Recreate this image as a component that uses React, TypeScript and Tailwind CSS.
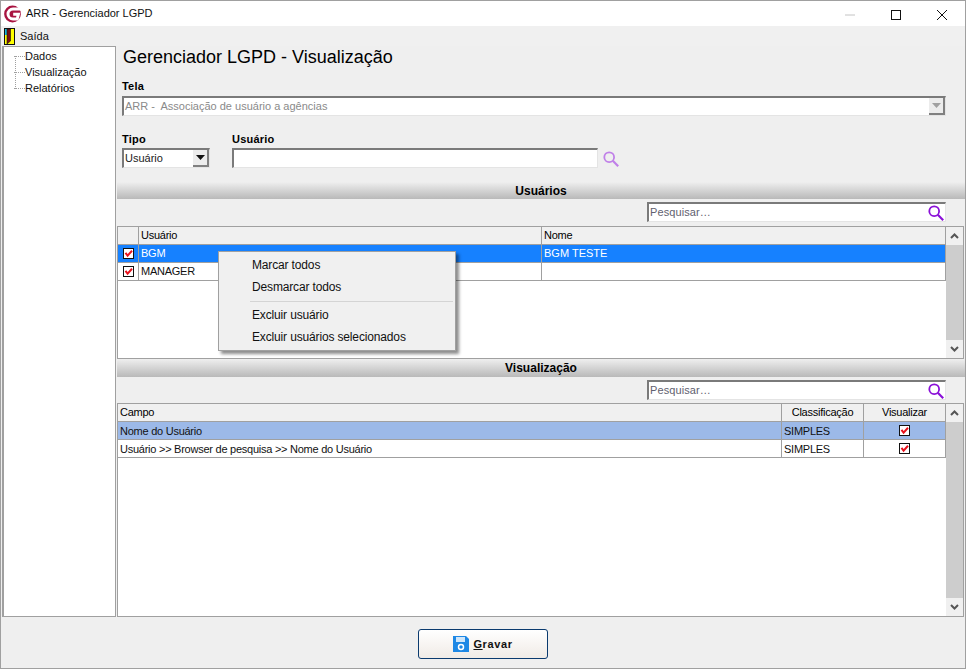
import type { ReactNode } from 'react';

const sans = 'font-["Liberation_Sans",Arial,sans-serif]';
const sunken = 'bg-white border-t-2 border-l-2 border-t-[#7a7a7a] border-l-[#7a7a7a] border-r border-b border-r-[#e4e4e4] border-b-[#e4e4e4]';

function Check() {
  return (
    <svg width="11" height="11" viewBox="0 0 11 11" className="block">
      <rect x="0.5" y="0.5" width="10" height="10" fill="#fff" stroke="#111" />
      <path d="M2.5 4.8 L4.6 7.6 L9 2.8" fill="none" stroke="#e8111c" strokeWidth="2" />
    </svg>
  );
}

function Lens({ color }: { color: string }) {
  return (
    <svg width="16" height="16" viewBox="0 0 16 16" className="block">
      <circle cx="6.2" cy="6.2" r="4.9" fill="none" stroke={color} strokeWidth="1.8" />
      <path d="M9.8 9.8 L15.2 15.2" stroke={color} strokeWidth="2.2" />
    </svg>
  );
}

function Band({ title, className }: { title: string; className: string }) {
  return (
    <div className={`flex items-center justify-center bg-gradient-to-b from-[#efefef] to-[#b9b9b9] text-[12px] font-bold text-black ${className}`}>
      {title}
    </div>
  );
}

function SearchBox({ h }: { h: string }) {
  return (
    <div className={`${h} flex items-start justify-end pt-[3px] pr-[19px]`}>
      <div className={`w-[299px] h-[20px] flex items-center justify-between pr-[1px] ${sunken}`}>
        <span className="text-[11px] text-[#5f5f6f] tracking-[0.1px] pl-[1px]">Pesquisar…</span>
        <Lens color="#8a10d8" />
      </div>
    </div>
  );
}

function Scrollbar() {
  return (
    <div className="w-[17px] shrink-0 flex flex-col bg-[#f0f0f0]">
      <div className="h-[18px] flex items-center justify-center">
        <svg width="9" height="6" viewBox="0 0 9 6"><path d="M1 5 L4.5 1.5 L8 5" fill="none" stroke="#555" strokeWidth="2" /></svg>
      </div>
      <div className="flex-1 bg-[#cdcdcd]" />
      <div className="h-[18px] flex items-center justify-center">
        <svg width="9" height="6" viewBox="0 0 9 6"><path d="M1 1 L4.5 4.5 L8 1" fill="none" stroke="#555" strokeWidth="2" /></svg>
      </div>
    </div>
  );
}

function Cell({ className, children }: { className: string; children?: ReactNode }) {
  return <div className={`flex items-center border-r border-[#a0a0a0] text-[11px] tracking-[-0.25px] ${className}`}>{children}</div>;
}

const menuItem = 'h-[22px] flex items-center pl-[33px] text-[12px] tracking-[-0.15px] text-[#111]';

export default function App() {
  return (
    <div className={`w-[966px] h-[669px] overflow-hidden bg-white ${sans}`}>
      <div className="w-[966px] h-[669px] flex flex-col border border-[#a0a0a0] bg-[#efefef]">
        {/* title bar */}
        <div className="h-[25px] shrink-0 bg-white flex items-center">
          <svg width="19" height="18" viewBox="0 0 19 18" className="ml-[3px] mr-[3px]">
            <circle cx="8.5" cy="9" r="8.4" fill="#a81340" />
            <path d="M17.5 4 H9 A5 5 0 0 0 9 14 H13.2 L14.4 9.2 H9.2" fill="none" stroke="#fff" strokeWidth="3" />
          </svg>
          <span className="text-[11px] text-[#111]">ARR - Gerenciador LGPD</span>
          <div className="ml-auto flex items-center">
            <svg width="46" height="24" viewBox="0 0 46 24"><path d="M18 13 H28" stroke="#c4c4c4" /></svg>
            <svg width="46" height="24" viewBox="0 0 46 24"><rect x="18.5" y="8.5" width="9" height="9" fill="none" stroke="#111" /></svg>
            <svg width="46" height="24" viewBox="0 0 46 24"><path d="M18 8 L28 18 M28 8 L18 18" stroke="#111" /></svg>
          </div>
        </div>

        {/* menu */}
        <div className="h-[20px] shrink-0 flex items-center bg-[#f0f0f0]">
          <svg width="11" height="17" viewBox="0 0 11 17" className="ml-[3px] mr-[5px]">
            <rect x="0.5" y="0.5" width="10" height="16" fill="#ffff00" stroke="#111" />
            <rect x="1" y="1" width="2" height="6" fill="#1bb8d8" />
            <path d="M3 1 H6.5 V13 L3 16 Z" fill="#7a1010" stroke="#111" strokeWidth="0.6" />
          </svg>
          <span className="text-[11px] text-[#111]">Saída</span>
        </div>

        <div className="flex-1 min-h-0 flex">
          {/* tree */}
          <div className="w-[114px] h-[571px] ml-[1px] mr-[1px] shrink-0 bg-white border border-[#a0a0a0] border-l-2 pt-[1px] pl-[8px] relative">
            <div className="absolute left-[11px] top-[9px] h-[33px] border-l border-dotted border-[#a0a0a0]" />
            {['Dados', 'Visualização', 'Relatórios'].map((t) => (
              <div key={t} className="h-[16px] flex items-center text-[11px] text-[#111]">
                <span className="w-[11px] ml-[2px] border-t border-dotted border-[#a0a0a0]" />
                {t}
              </div>
            ))}
          </div>

          {/* main */}
          <div className="flex-1 min-w-0 relative">
            <div className="pl-[6px] h-[22px] flex items-center text-[18px] text-black">
              Gerenciador LGPD - Visualização
            </div>
            <div className="pl-[5px] h-[16px] mt-[10px] flex items-center text-[11px] font-bold tracking-[0.2px]">Tela</div>
            <div className={`ml-[5px] mr-[19px] h-[20px] mt-[2px] flex items-center justify-between pl-[1px] ${sunken}`}>
              <span className="text-[11px] text-[#8a8a8a] whitespace-pre">ARR -  Associação de usuário a agências</span>
              <div className="w-[16px] h-[17px] flex items-center justify-center bg-[#ececec] border-r-2 border-b-2 border-[#808080]">
                <svg width="9" height="5" viewBox="0 0 9 5"><path d="M0 0 H9 L4.5 5 Z" fill="#a0a0a0" /></svg>
              </div>
            </div>

            <div className="flex pl-[5px] mt-[15px]">
              <div className="w-[88px]">
                <div className="h-[16px] flex items-center text-[11px] font-bold tracking-[0.2px]">Tipo</div>
                <div className={`mt-[1px] h-[20px] flex items-center justify-between ${sunken}`}>
                  <span className="text-[11px] pl-[1px] text-[#222]">Usuário</span>
                  <div className="w-[16px] h-[17px] flex items-center justify-center bg-[#ececec] border-r-2 border-b-2 border-[#808080]">
                    <svg width="9" height="5" viewBox="0 0 9 5"><path d="M0 0 H9 L4.5 5 Z" fill="#111" /></svg>
                  </div>
                </div>
              </div>
              <div className="ml-[22px] w-[366px]">
                <div className="h-[16px] flex items-center text-[11px] font-bold tracking-[0.2px]">Usuário</div>
                <div className={`mt-[1px] h-[20px] ${sunken}`} />
              </div>
              <div className="ml-[5px] pt-[20px]">
                <Lens color="#c080e8" />
              </div>
            </div>

            {/* usuarios */}
            <Band title="Usuários" className="mt-[14px] h-[17px]" />
            <SearchBox h="h-[27px]" />
            <div className="h-[133px] mr-[1px] flex border border-[#a0a0a0] bg-white">
              <div className="flex-1 min-w-0 flex flex-col">
                <div className="h-[18px] flex bg-[#f0f0f0] border-b border-[#a0a0a0]">
                  <Cell className="w-[21px]" />
                  <Cell className="w-[403px] pl-[2px]">Usuário</Cell>
                  <Cell className="flex-1 pl-[2px]">Nome</Cell>
                </div>
                <div className="h-[18px] flex bg-[#1681ff] text-white border-b border-[#a0a0a0]">
                  <Cell className="w-[21px] justify-center bg-[#1681ff]"><Check /></Cell>
                  <Cell className="w-[403px] pl-[2px]">BGM</Cell>
                  <Cell className="flex-1 pl-[2px]"><span className="tracking-[0px]">BGM TESTE</span></Cell>
                </div>
                <div className="h-[18px] flex border-b border-[#a0a0a0] text-[#111]">
                  <Cell className="w-[21px] justify-center"><Check /></Cell>
                  <Cell className="w-[403px] pl-[2px]">MANAGER</Cell>
                  <Cell className="flex-1 pl-[2px]" />
                </div>
              </div>
              <Scrollbar />
            </div>

            {/* visualizacao */}
            <Band title="Visualização" className="h-[18px]" />
            <SearchBox h="h-[26px]" />
            <div className="h-[214px] mr-[1px] flex border border-[#a0a0a0] bg-white">
              <div className="flex-1 min-w-0 flex flex-col">
                <div className="h-[18px] flex bg-[#f0f0f0] border-b border-[#a0a0a0]">
                  <Cell className="w-[664px] pl-[2px]">Campo</Cell>
                  <Cell className="w-[82px] justify-center">Classificação</Cell>
                  <Cell className="flex-1 justify-center">Visualizar</Cell>
                </div>
                <div className="h-[18px] flex bg-[#9cb9e8] border-b border-[#a0a0a0] text-[#111]">
                  <Cell className="w-[664px] pl-[2px] pt-[1px]">Nome do Usuário</Cell>
                  <Cell className="w-[82px] pl-[2px] pt-[1px]">SIMPLES</Cell>
                  <Cell className="flex-1 justify-center"><Check /></Cell>
                </div>
                <div className="h-[18px] flex border-b border-[#a0a0a0] text-[#111]">
                  <Cell className="w-[664px] pl-[2px] pt-[1px]">Usuário &gt;&gt; Browser de pesquisa &gt;&gt; Nome do Usuário</Cell>
                  <Cell className="w-[82px] pl-[2px] pt-[1px]">SIMPLES</Cell>
                  <Cell className="flex-1 justify-center"><Check /></Cell>
                </div>
              </div>
              <Scrollbar />
            </div>

            {/* context menu */}
            <div className="absolute left-[101px] top-[205px] w-[238px] h-[100px] bg-[#f0f0f0] border border-[#a0a0a0] shadow-[3px_3px_3px_rgba(0,0,0,0.45)] py-[2px]">
              <div className={menuItem}>Marcar todos</div>
              <div className={menuItem}>Desmarcar todos</div>
              <div className="h-[6px] flex items-center ml-[31px] mr-[2px]"><div className="w-full border-t border-[#d4d4d4]" /></div>
              <div className={menuItem}>Excluir usuário</div>
              <div className={menuItem}>Excluir usuários selecionados</div>
            </div>
          </div>
        </div>

        {/* footer */}
        <div className="h-[51px] shrink-0 flex items-start justify-center pt-[12px]">
          <div className="w-[130px] h-[30px] flex items-center justify-center gap-[4px] rounded-[3px] border border-[#0a3a6e] bg-gradient-to-b from-white to-[#f0ebe6]">
            <svg width="16" height="16" viewBox="0 0 16 16">
              <path d="M0 0 H13 L16 3 V16 H0 Z" fill="#1e88e5" />
              <rect x="3" y="1" width="9" height="5" fill="#cfe6fa" />
              <circle cx="8" cy="11" r="2.5" fill="none" stroke="#fff" strokeWidth="1.5" />
            </svg>
            <span className="text-[11px] font-bold tracking-[0.6px] text-[#111]"><span className="underline">G</span>ravar</span>
          </div>
        </div>
      </div>
    </div>
  );
}
